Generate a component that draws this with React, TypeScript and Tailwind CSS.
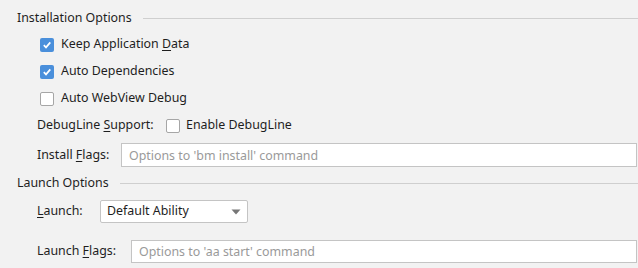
import { ReactNode } from 'react';

const font = { fontFamily: '"Noto Sans", "Open Sans", Arial, sans-serif' };

// Small checkbox like the IDE one
const Check = ({ checked }: { checked?: boolean }) =>
  checked ? (
    <span className="w-[14px] h-[14px] rounded-[2px] bg-[#4a8fdb] flex items-center justify-center shrink-0">
      <svg width="10" height="10" viewBox="0 0 10 10">
        <path d="M1.8 5.2 L4 7.4 L8.3 2.4" fill="none" stroke="white" strokeWidth="1.7" />
      </svg>
    </span>
  ) : (
    <span className="w-[14px] h-[14px] rounded-[2px] bg-white border border-[#a6a6a6] shrink-0" />
  );

const Mn = ({ children }: { children: ReactNode }) => <span className="underline underline-offset-2">{children}</span>;

const SectionTitle = ({ title }: { title: string }) => (
  <div className="flex items-center h-[20px] pl-[17px]">
    <span>{title}</span>
    <div className="flex-1 h-px bg-[#cfcfcf] ml-[11px]" />
  </div>
);

const CheckRow = ({ checked, children }: { checked?: boolean; children: ReactNode }) => (
  <div className="flex items-center h-[27px] pl-[40px] gap-[7px]">
    <Check checked={checked} />
    <span>{children}</span>
  </div>
);

export default function App() {
  return (
    <div className="w-[638px] h-[268px] bg-[#f2f2f2] text-[12.4px] text-[#1e1e1e] overflow-hidden pt-[8px]" style={font}>
      <SectionTitle title="Installation Options" />

      <div className="mt-[3px]">
        <CheckRow checked>
          Keep Application <Mn>D</Mn>ata
        </CheckRow>
        <CheckRow checked>Auto Dependencies</CheckRow>
        <CheckRow>Auto WebView Debug</CheckRow>
        <div className="flex items-center h-[27px] pl-[37px]">
          <span className="w-[129px]">
            DebugLine <Mn>S</Mn>upport:
          </span>
          <Check />
          <span className="ml-[6px]">Enable DebugLine</span>
        </div>
      </div>

      <div className="flex items-center h-[24px] mt-[4px] pl-[37px]">
        <span className="w-[84px]">
          Install <Mn>F</Mn>lags:
        </span>
        <input
          className="flex-1 h-[24px] mr-[1px] bg-white border border-[#c4c4c4] px-[7px] outline-none placeholder:text-[#9a9a9a]"
          placeholder="Options to 'bm install' command"
          style={font}
        />
      </div>

      <div className="mt-[6px]">
        <SectionTitle title="Launch Options" />
      </div>

      <div className="flex items-center h-[23px] mt-[7px] pl-[37px]">
        <span className="w-[63px]">
          <Mn>L</Mn>aunch:
        </span>
        <div className="w-[148px] h-[23px] bg-white border border-[#c4c4c4] rounded-[2px] flex items-center justify-between pl-[6px] pr-[6px]">
          <span>Default Ability</span>
          <svg width="10" height="6" viewBox="0 0 10 6">
            <path d="M0.5 0.5 H9.5 L5 5.5 Z" fill="#777777" />
          </svg>
        </div>
      </div>

      <div className="flex items-center h-[23px] mt-[17px] pl-[37px]">
        <span className="w-[94px]">
          Launch <Mn>F</Mn>lags:
        </span>
        <input
          className="flex-1 h-[23px] mr-[1px] bg-white border border-[#c4c4c4] px-[7px] outline-none placeholder:text-[#9a9a9a]"
          placeholder="Options to 'aa start' command"
          style={font}
        />
      </div>
    </div>
  );
}
